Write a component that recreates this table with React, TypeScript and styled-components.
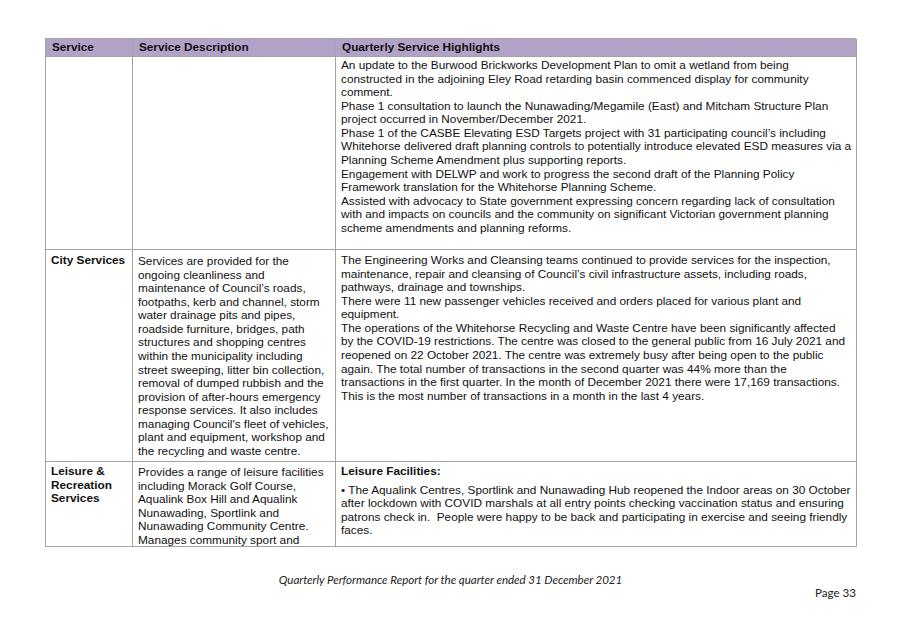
import React from "react";
import styled, { createGlobalStyle } from "styled-components";

const Global = createGlobalStyle`
  html, body { margin: 0; padding: 0; background: #ffffff; }
  body { width: 902px; height: 638px; overflow: hidden; }
`;

const Page = styled.div`
  width: 902px;
  height: 638px;
  box-sizing: border-box;
  padding: 38px 0 0 45px;
  font-family: "Liberation Sans", Arial, sans-serif;
  color: #111;
  display: flex;
  flex-direction: column;
`;

const Table = styled.div`
  display: grid;
  grid-template-columns: 87px 203px 521px;
  grid-template-rows: 18px 193px 212px 85px;
  width: 811px;
  border-top: 1px solid #a3a3a3;
  border-left: 1px solid #a3a3a3;
  box-sizing: border-box;
`;

const HeadCell = styled.div`
  background: #b2a2c8;
  border-right: 1px solid #a3a3a3;
  border-bottom: 1px solid #a3a3a3;
  font-weight: bold;
  font-size: 11.75px;
  line-height: 16px;
  padding: 0 6px;
  box-sizing: border-box;
  white-space: nowrap;
`;

const Cell = styled.div<{ $top?: number; $bold?: boolean }>`
  border-right: 1px solid #a3a3a3;
  border-bottom: 1px solid #a3a3a3;
  padding: ${(p) => p.$top ?? 0}px 4px 0 5px;
  box-sizing: border-box;
  font-size: 11.8px;
  line-height: 13.57px;
  font-weight: ${(p) => (p.$bold ? "bold" : "normal")};
  white-space: pre;
  overflow: hidden;
`;

const Para = styled.p<{ $after?: number; $bold?: boolean }>`
  margin: 0 0 ${(p) => p.$after ?? 0}px 0;
  font-weight: ${(p) => (p.$bold ? "bold" : "inherit")};
`;

const Footer = styled.div`
  width: 811px;
  display: flex;
  flex-direction: column;
  font-family: "Lato", "Open Sans", sans-serif;
  font-size: 11.6px;
  color: #222;
`;

const FooterTitle = styled.div`
  font-style: italic;
  text-align: center;
  margin-top: 26px;
  letter-spacing: -0.05px;
`;

const PageNo = styled.div`
  text-align: right;
  margin-top: 0;
`;

const Lines: React.FC<{ lines: string[] }> = ({ lines }) => (
  <>
    {lines.map((l, i) => (
      <React.Fragment key={i}>
        {l}
        {i < lines.length - 1 && <br />}
      </React.Fragment>
    ))}
  </>
);

const row1 = [
  "An update to the Burwood Brickworks Development Plan to omit a wetland from being",
  "constructed in the adjoining Eley Road retarding basin commenced display for community",
  "comment.",
  "Phase 1 consultation to launch the Nunawading/Megamile (East) and Mitcham Structure Plan",
  "project occurred in November/December 2021.",
  "Phase 1 of the CASBE Elevating ESD Targets project with 31 participating council\u2019s including",
  "Whitehorse delivered draft planning controls to potentially introduce elevated ESD measures via a",
  "Planning Scheme Amendment plus supporting reports.",
  "Engagement with DELWP and work to progress the second draft of the Planning Policy",
  "Framework translation for the Whitehorse Planning Scheme.",
  "Assisted with advocacy to State government expressing concern regarding lack of consultation",
  "with and impacts on councils and the community on significant Victorian government planning",
  "scheme amendments and planning reforms.",
];

const cityDesc = [
  "Services are provided for the",
  "ongoing cleanliness and",
  "maintenance of Council\u2019s roads,",
  "footpaths, kerb and channel, storm",
  "water drainage pits and pipes,",
  "roadside furniture, bridges, path",
  "structures and shopping centres",
  "within the municipality including",
  "street sweeping, litter bin collection,",
  "removal of dumped rubbish and the",
  "provision of after-hours emergency",
  "response services. It also includes",
  "managing Council's fleet of vehicles,",
  "plant and equipment, workshop and",
  "the recycling and waste centre.",
];

const cityHigh = [
  "The Engineering Works and Cleansing teams continued to provide services for the inspection,",
  "maintenance, repair and cleansing of Council\u2019s civil infrastructure assets, including roads,",
  "pathways, drainage and townships.",
  "There were 11 new passenger vehicles received and orders placed for various plant and",
  "equipment.",
  "The operations of the Whitehorse Recycling and Waste Centre have been significantly affected",
  "by the COVID-19 restrictions. The centre was closed to the general public from 16 July 2021 and",
  "reopened on 22 October 2021. The centre was extremely busy after being open to the public",
  "again. The total number of transactions in the second quarter was 44% more than the",
  "transactions in the first quarter. In the month of December 2021 there were 17,169 transactions.",
  "This is the most number of transactions in a month in the last 4 years.",
];

const leisureDesc = [
  "Provides a range of leisure facilities",
  "including Morack Golf Course,",
  "Aqualink Box Hill and Aqualink",
  "Nunawading, Sportlink and",
  "Nunawading Community Centre.",
  "Manages community sport and",
];

const leisureHigh = [
  "\u2022 The Aqualink Centres, Sportlink and Nunawading Hub reopened the Indoor areas on 30 October",
  "after lockdown with COVID marshals at all entry points checking vaccination status and ensuring",
  "patrons check in.  People were happy to be back and participating in exercise and seeing friendly",
  "faces.",
];

export default function App() {
  return (
    <>
      <Global />
      <Page>
        <Table>
          <HeadCell>Service</HeadCell>
          <HeadCell>Service Description</HeadCell>
          <HeadCell>Quarterly Service Highlights</HeadCell>

          <Cell />
          <Cell />
          <Cell $top={2}>
            <Lines lines={row1} />
          </Cell>

          <Cell $top={4} $bold>
            City Services
          </Cell>
          <Cell $top={5}>
            <Lines lines={cityDesc} />
          </Cell>
          <Cell $top={4}>
            <Lines lines={cityHigh} />
          </Cell>

          <Cell $top={3} $bold>
            <Lines lines={["Leisure &", "Recreation", "Services"]} />
          </Cell>
          <Cell $top={4}>
            <Lines lines={leisureDesc} />
          </Cell>
          <Cell $top={3}>
            <Para $bold $after={5}>Leisure Facilities:</Para>
            <Para>
              <Lines lines={leisureHigh} />
            </Para>
          </Cell>
        </Table>
        <Footer>
          <FooterTitle>Quarterly Performance Report for the quarter ended 31 December 2021</FooterTitle>
          <PageNo>Page 33</PageNo>
        </Footer>
      </Page>
    </>
  );
}
